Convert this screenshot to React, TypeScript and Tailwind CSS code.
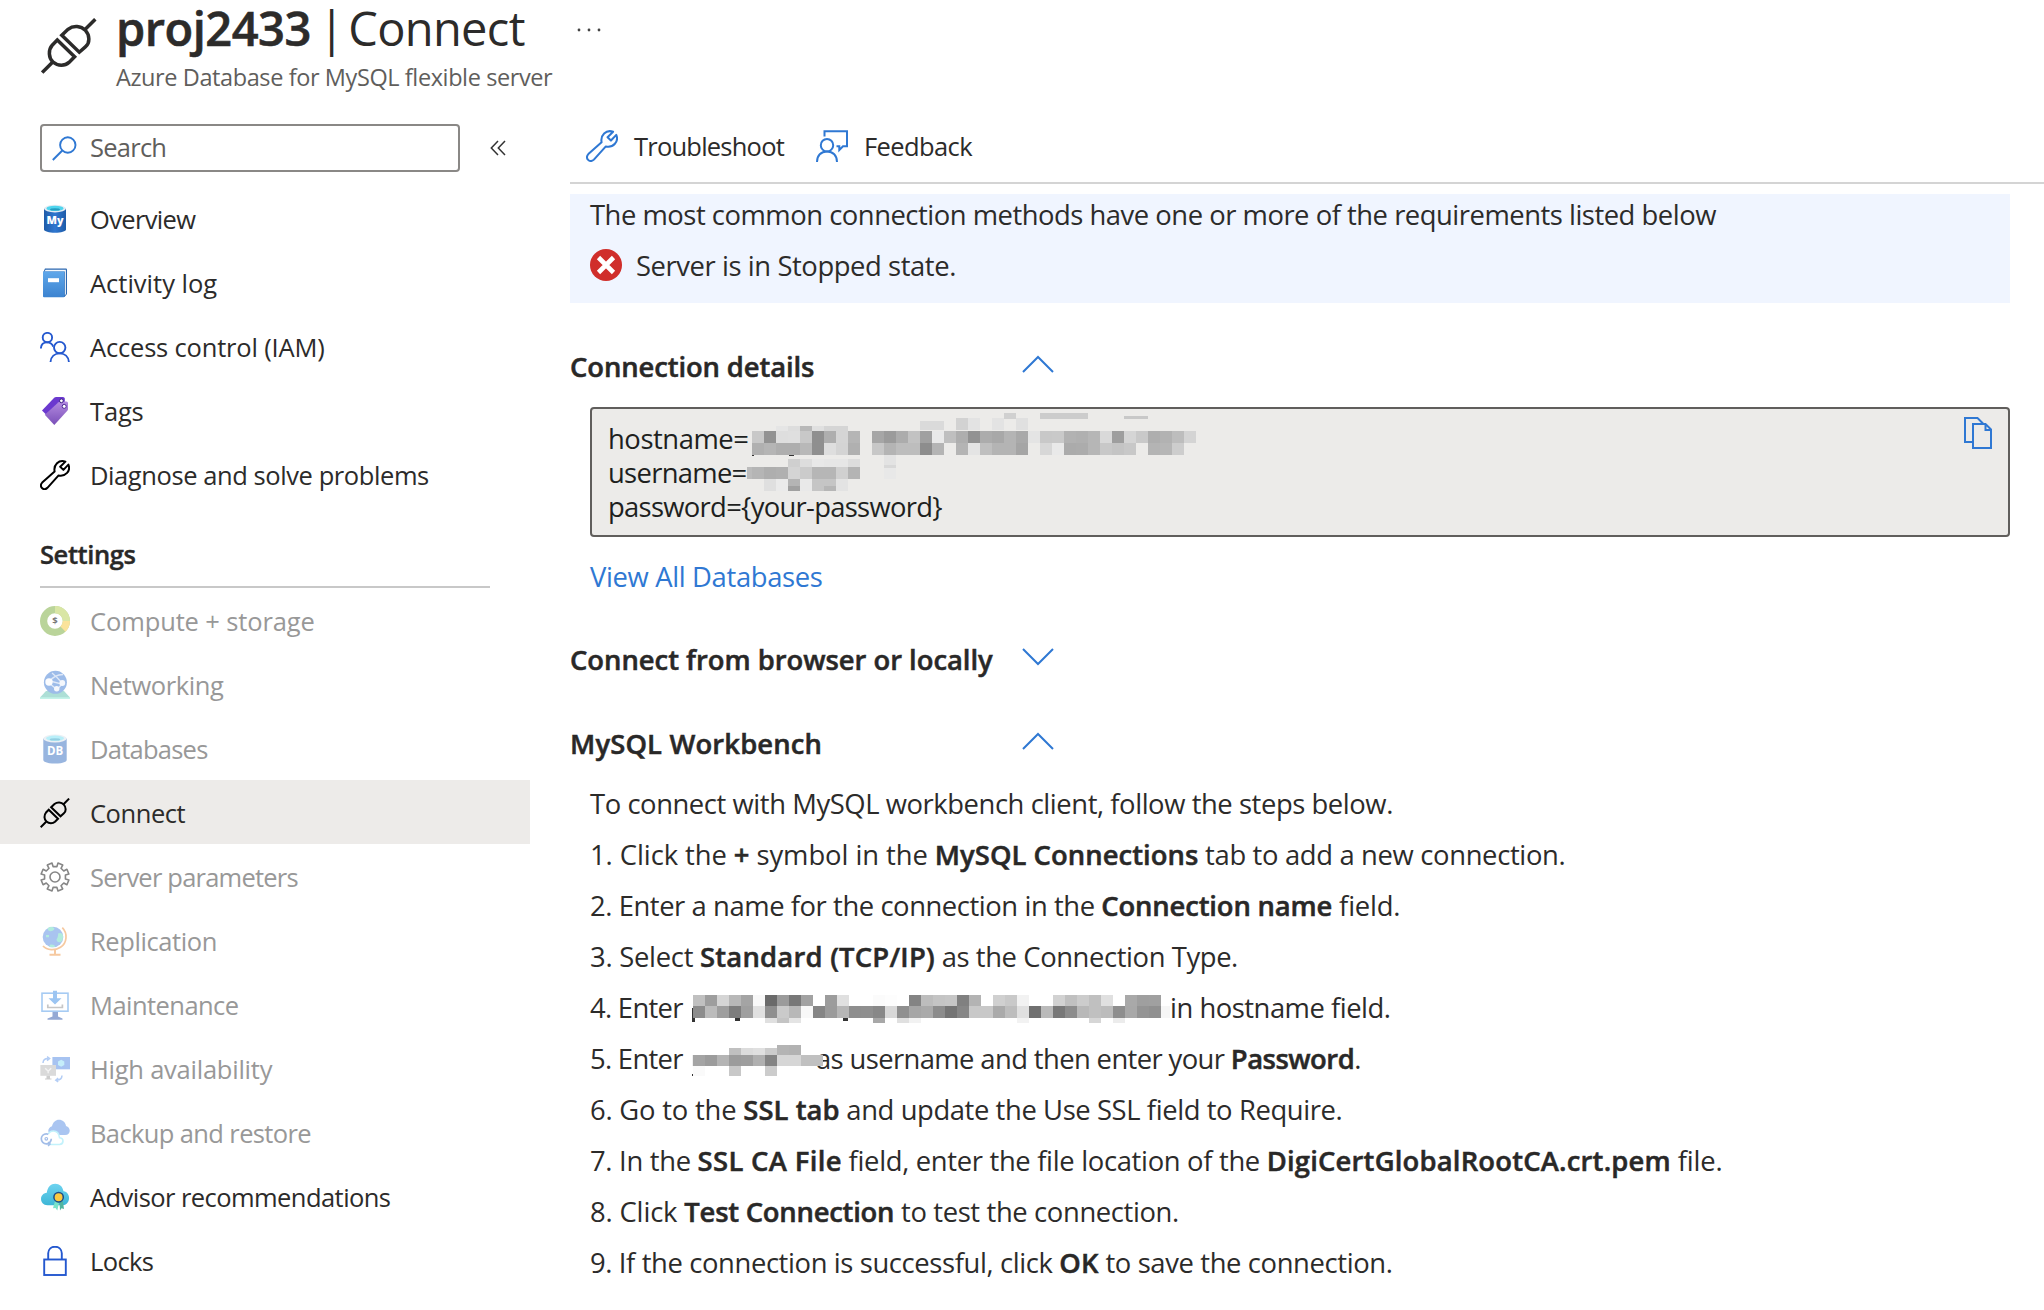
import React, { ReactNode } from "react";

/* ---------- icons ---------- */

function Plug({ className, stroke }: { className: string; stroke: number }) {
  return (
    <svg viewBox="0 0 56 56" fill="none" stroke="currentColor" strokeWidth={stroke} className={className}>
      <path d="M54.3 1.2 43.5 12M1.2 54.6 11.5 44.3" />
      <path d="M20.8 17.2 27 11.3C32.5 7 40 7.8 44.4 12.4C49 17.3 49 25 44.6 28.6L38.3 34.2Z" />
      <path d="M16.3 22 11.2 27.2C7 31.8 7.6 40 12 44C17 48.4 24 48 28 44.4L33.6 38.8Z" />
    </svg>
  );
}

function Wrench({ className, stroke }: { className: string; stroke: number }) {
  return (
    <svg viewBox="0 0 30 30" fill="none" stroke="currentColor" strokeWidth={stroke} strokeLinejoin="round" className={className}>
      <path d="M14.6 11.4C13.4 5 18.6-.6 25.4 1.6L20.2 6.8 23.4 9.9 28.4 4.6C31 11 25.6 16.8 18.6 15.4L7.4 27.8C5.6 29.6 3.4 29.4 2 28S.4 24.4 2.2 22.6Z" />
    </svg>
  );
}

function MySqlIcon() {
  return (
    <svg viewBox="0 0 30 30" className="size-[30px]">
      <defs>
        <linearGradient id="my" x1="0" x2="1">
          <stop offset="0" stopColor="#1e5ba8" />
          <stop offset=".5" stopColor="#2f77d0" />
          <stop offset="1" stopColor="#1e5ba8" />
        </linearGradient>
      </defs>
      <path d="M4 4.5V25.5C4 27.3 9 28.8 15 28.8S26 27.3 26 25.5V4.5Z" fill="url(#my)" />
      <ellipse cx="15" cy="4.6" rx="11" ry="3.8" fill="#e4ecf3" />
      <ellipse cx="15" cy="4.4" rx="8.6" ry="2.6" fill="#4fd5ee" />
      <ellipse cx="15" cy="5.4" rx="5" ry="1.2" fill="#259cc0" />
      <text x="15" y="19.6" textAnchor="middle" fontSize="10.5" textLength="17" lengthAdjust="spacingAndGlyphs" fontWeight="800" fill="#fff" fontFamily="Open Sans, sans-serif">My</text>
    </svg>
  );
}

function BookIcon() {
  return (
    <svg viewBox="0 0 30 30" className="size-[30px]">
      <defs>
        <linearGradient id="book" x1="0" y1="0" x2="0" y2="1">
          <stop offset="0" stopColor="#5ea7ea" />
          <stop offset="1" stopColor="#3c83d0" />
        </linearGradient>
      </defs>
      <path d="M5 .6H26Q27 .6 27 1.6V26L24.5 29H4.5L3.4 4Z" fill="#2a67b0" />
      <path d="M5.6 1.8H25.9V26L24.8 27.6V3.6H4.4Z" fill="#f4f8fc" />
      <path d="M3 3.6H24.4V28.6Q24.4 29.3 23.6 29.3H4Q3 29.3 3 28.3Z" fill="url(#book)" />
      <rect x="8" y="10.2" width="11" height="4" fill="#fff" />
    </svg>
  );
}

function PeopleIcon() {
  return (
    <svg viewBox="0 0 30 30" className="size-[30px]" fill="none" stroke="#2458cf" strokeWidth="1.9">
      <circle cx="7.4" cy="5.6" r="4.7" />
      <path d="M.9 16.6C1 12.6 3.6 10.4 7.2 10.4c3 0 5 1.4 6 4.2" />
      <circle cx="19.7" cy="15.6" r="5.7" />
      <path d="M10.5 30C11 24.6 14.6 21.4 19.7 21.4S28.4 24.6 28.9 30" />
    </svg>
  );
}

function TagsIcon() {
  return (
    <svg viewBox="0 0 30 30" className="size-[30px]">
      <defs>
        <linearGradient id="tag" x1="0" y1="0" x2="0" y2="1">
          <stop offset="0" stopColor="#b38be0" />
          <stop offset="1" stopColor="#7a4fb8" />
        </linearGradient>
      </defs>
      <path d="M2 14.5 14.2 1.7Q15 1 16.2 1H23Q24.6 1 24.8 2.5V8L7 19.6Z" fill="#6b39cf" />
      <path d="M4.8 18.8 18.5 6.2Q19.3 5.5 20.3 5.5H26.5Q28 5.6 28 7V13Q28 14 27.3 14.8L14.3 29Z" fill="url(#tag)" />
      <circle cx="21.4" cy="4.8" r="1.9" fill="#fff" stroke="#3c1f86" strokeWidth="1" />
      <circle cx="24.2" cy="10.4" r="2" fill="#fff" stroke="#4c2a96" strokeWidth="1" />
    </svg>
  );
}

function ComputeIcon() {
  return (
    <svg viewBox="0 0 30 30" className="size-[30px]" fill="none">
      <circle cx="15" cy="15" r="11.4" stroke="#bad49a" strokeWidth="7.2" />
      <path d="M15 3.6A11.4 11.4 0 0 1 26.4 15" stroke="#d9e6a5" strokeWidth="7.2" />
      <path d="M26.4 15A11.4 11.4 0 0 1 23 23.1" stroke="#fbe39a" strokeWidth="7.2" />
      <text x="15" y="18.4" textAnchor="middle" fontSize="9.5" fontWeight="700" fill="#777" fontFamily="Open Sans, sans-serif">$</text>
    </svg>
  );
}

function NetworkingIcon() {
  return (
    <svg viewBox="0 0 30 30" className="size-[30px]">
      <path d="M6 21H24L30 27.5V29H0V27.5Z" fill="#addfd6" />
      <path d="M0 27.3H30V29H0Z" fill="#c3f3e8" />
      <circle cx="15.4" cy="12.3" r="11.5" fill="#9dbce9" />
      <path d="M10 11 22 14 17 19.5 9 13M10 11Q14 5 23 4.5M12 3Q17 7 22 13" stroke="#dfe9f8" strokeWidth="1.3" fill="none" />
      <circle cx="9" cy="12" r="3.7" fill="#fbfcfe" />
      <circle cx="22.3" cy="13" r="2.9" fill="#f4f7fc" />
      <circle cx="16.7" cy="18.7" r="2.7" fill="#f4f7fc" />
    </svg>
  );
}

function DatabasesIcon() {
  return (
    <svg viewBox="0 0 30 30" className="size-[30px]">
      <path d="M3.3 4.5V26C3.3 28 8.5 29.6 15 29.6S26.7 28 26.7 26V4.5Z" fill="#98b5df" />
      <ellipse cx="15" cy="4.5" rx="11.7" ry="4" fill="#ebf0f5" />
      <ellipse cx="15" cy="4.3" rx="9" ry="2.7" fill="#b9eff9" />
      <ellipse cx="15" cy="5.4" rx="5.3" ry="1.2" fill="#93cfe2" />
      <text x="15" y="21.3" textAnchor="middle" fontSize="11.5" fontWeight="700" fill="#fff" fontFamily="Open Sans, sans-serif">DB</text>
    </svg>
  );
}

function GearIcon() {
  const teeth = [0, 45, 90, 135, 180, 225, 270, 315];
  const pt = (r: number, deg: number) => {
    const a = ((deg - 90) * Math.PI) / 180;
    return `${(15 + r * Math.cos(a)).toFixed(2)} ${(15 + r * Math.sin(a)).toFixed(2)}`;
  };
  const d =
    teeth
      .map((t, i) => {
        const c = t + 22.5;
        return `${i === 0 ? "M" : "L"}${pt(10.6, c - 12)}L${pt(14.2, c - 10.5)}L${pt(14.2, c + 10.5)}L${pt(10.6, c + 12)}`;
      })
      .join("") + "Z";
  return (
    <svg viewBox="0 0 30 30" className="size-[30px]" fill="none" stroke="#868686" strokeWidth="1.6" strokeLinejoin="round">
      <path d={d} />
      <circle cx="15" cy="15" r="5" />
    </svg>
  );
}

function ReplicationIcon() {
  return (
    <svg viewBox="0 0 30 30" className="size-[30px]">
      <circle cx="13" cy="11" r="10.3" fill="#a9c4f0" />
      <path d="M8 2Q12-.5 14.5 2.5 13.5 5.5 10 5.2 7 4.5 8 2ZM18 7.5Q22 6 23 9.5 23.5 13 21 16 17 17 16.5 13.5 18.5 11 18 7.5ZM10 18.7Q14 18 15.5 20.5 13 22 9 20.7ZM6 9h3v2.2h-3Z" fill="#b2ecdd" />
      <path d="M22.3 1.7C28 7.5 27 17 20.5 21.3C15 24.8 7 24.5 3 20" fill="none" stroke="#f6c9a0" strokeWidth="1.7" />
      <path d="M15 23.5V28.5M9.5 28.8H20.5" stroke="#f6c9a0" strokeWidth="2" />
    </svg>
  );
}

function MaintenanceIcon() {
  return (
    <svg viewBox="0 0 30 30" className="size-[30px]">
      <rect x="2" y="3.2" width="26" height="18" fill="#fff" stroke="#a6cbf3" strokeWidth="1.6" />
      <path d="M12.5 22h5.5v4.5l4.5 2v1.2H7.5v-1.2l5-2Z" fill="#94a9d4" />
      <path d="M13 .7h4v7.6h4.5L15 14.6 8.5 8.3H13Z" fill="#9cc5f2" />
      <path d="M7.8 14.5v3h14.6v-3" fill="none" stroke="#c6c6c6" strokeWidth="1.7" />
    </svg>
  );
}

function AvailabilityIcon() {
  return (
    <svg viewBox="0 0 30 30" className="size-[30px]">
      <rect x="12.4" y="3" width="17.6" height="12.3" fill="#a7c3f1" />
      <path d="M21.2 5.8 24.3 7.5V11L21.2 12.8 18 11V7.5Z" fill="#c5eefa" />
      <rect x=".4" y="11" width="15.6" height="10.8" fill="#dadada" />
      <path d="M5.2 14.2 8.2 17.2 11.2 14.2M8.2 17.2v2" stroke="#f3f3f3" strokeWidth="1.4" fill="none" />
      <path d="M6.5 21.8h3.5v2.6h1.5v1H5v-1h1.5Z" fill="#cdcdcd" />
      <path d="M3 9Q3.2 4.6 8 4.6M7 2.6 9.6 4.6 7 6.7M22 21.5Q21.8 26 17 26M18.2 24 15.8 26.1 18.2 28" stroke="#b3cdf5" strokeWidth="1.5" fill="none" />
    </svg>
  );
}

function BackupIcon() {
  return (
    <svg viewBox="0 0 30 30" className="size-[30px]">
      <path d="M12.5 17C7.5 17 6.5 10 12 8.3 13 4 16 1.7 19 1.8 22.5 1.8 25.5 4.2 26 8 31 9 31.3 17 25 17Z" fill="#aac5f1" />
      <path d="M9 26.5H19.5C24 26 24.2 20.2 19.6 19.8 19 15.4 16.5 13 13.5 13 10.5 13 8.5 15 7.8 17.3Z" fill="#fff" stroke="#c3f2fb" strokeWidth="1.6" />
      <circle cx="6.3" cy="20.8" r="5" fill="#fff" stroke="#a2bde8" strokeWidth="1.7" strokeDasharray="25 6.4" />
      <circle cx="6.3" cy="20.8" r="1.3" fill="none" stroke="#a2bde8" strokeWidth="1.2" />
      <path d="M6.5 25.8H10M8 24 10.2 25.9 8 28" stroke="#a2bde8" strokeWidth="1.3" fill="none" />
    </svg>
  );
}

function AdvisorIcon() {
  return (
    <svg viewBox="0 0 30 30" className="size-[30px]">
      <defs>
        <linearGradient id="adv" x1="0" y1="0" x2="0" y2="1">
          <stop offset="0" stopColor="#6ed3f0" />
          <stop offset="1" stopColor="#3db6d6" />
        </linearGradient>
      </defs>
      <path d="M7.5 23.3C-1 23-1 11.5 6.8 10.8 7.5 4.8 11 1.7 15.2 1.7 19.5 1.7 22.8 4.5 23.5 9.3 31.5 10.5 30.5 22.8 23 23.3Z" fill="url(#adv)" />
      <path d="M15 19 13 26.3 15.5 26 17.3 28.6 19 21Z" fill="#7be3c9" />
      <path d="M19.5 20.5 20 28.6 21.5 26.3 24 27 22.8 19Z" fill="#51b59f" />
      <circle cx="18.6" cy="15.2" r="4.7" fill="#fcc940" stroke="#1d4c86" strokeWidth="1.5" />
    </svg>
  );
}

function LockIcon() {
  return (
    <svg viewBox="0 0 30 30" className="size-[30px]" fill="none" stroke="#2458cf" strokeWidth="1.9">
      <rect x="4.2" y="13.5" width="21.6" height="15.5" />
      <path d="M8.2 13.5V7.3C8.2 3.5 11 .7 15 .7S21.8 3.5 21.8 7.3V13.5" />
    </svg>
  );
}

function Chevron({ down }: { down?: boolean }) {
  return (
    <svg viewBox="0 0 32 18" className="h-[18px] w-[32px]" fill="none" stroke="#2f78d3" strokeWidth="2">
      <path d={down ? "M1 1 16 16 31 1" : "M1 17 16 2 31 17"} />
    </svg>
  );
}

/* ---------- redacted values: rows of 12px grey cells ---------- */

type Strip = { x: number; y: number; h: number; cells: string };

function Mosaic({ strips, marks, className }: { strips: Strip[]; marks: [number, number, number, number][]; className: string }) {
  return (
    <svg className={className} shapeRendering="crispEdges">
      {marks.map(([x, y, w, h], i) => (
        <rect key={`m${i}`} x={x} y={y} width={w} height={h} fill="#333" />
      ))}
      {strips.map((s, r) =>
        s.cells.split(" ").map((c, i) =>
          c === "--" ? null : <rect key={`${r}-${i}`} x={s.x + i * 12} y={s.y} width="12" height={s.h} fill={`#${c}${c}${c}`} />
        )
      )}
    </svg>
  );
}

const hostStrips: Strip[] = [
  { x: 257, y: 4, h: 6, cells: "d0 -- -- cc cc cc cc" },
  { x: 377, y: 7, h: 3, cells: "c8 c8" },
  { x: 173, y: 12, h: 9, cells: "da da -- d3 e4" },
  { x: 209, y: 9, h: 12, cells: "d2 e3 -- e3 -- e0" },
  { x: 29, y: 17, h: 5, cells: "e5 dd b8 e0 d5 d5" },
  { x: 5, y: 22, h: 12, cells: "c8 92 de df c8 8f ae d5 b5 -- a6 9b ac c2 a0 e9 bf ae 92 ac a8 b4 a9 e4 c8 c9 b2 b0 b6 d9 9e d5 c9 ae b2 bd d4" },
  { x: 5, y: 34, h: 12, cells: "b0 b5 ae ae b8 8f de d4 b0 -- c7 b4 bd bd 8d b4 -- b4 e4 bf b4 b4 a5 -- d7 e9 ab ac b6 c8 c4 c8 -- b4 b6 cd" },
  { x: 137, y: 46, h: 10, cells: "e3" },
  { x: 137, y: 56, h: 3, cells: "d8" },
  { x: 137, y: 59, h: 11, cells: "e8" },
  { x: 41, y: 50, h: 8, cells: "cf dd e8 e6 e6 dd" },
  { x: 0, y: 58, h: 12, cells: "bb" },
  { x: 5, y: 58, h: 12, cells: "b5 ae b0 d4 cb b6 b6 d0 b4" },
  { x: 17, y: 70, h: 12, cells: "df ea -- e9 c5 b8 e3" },
  { x: 41, y: 70, h: 7, cells: "b4 -- -- c5" },
  { x: 41, y: 77, h: 5, cells: "a0 -- -- b6" },
];

const hostStepStrips: Strip[] = [
  { x: 1, y: 1, h: 11, cells: "c0 9e d5 b8 a4 f8 6a 9b 78 a2 -- 9c e0 -- -- fb fd -- 84 bd c4 c6 80 b3 -- d0 c9 f2 -- -- d2 c0 cc c0 e0 -- a9 9f a0" },
  { x: 1, y: 12, h: 12, cells: "8c bb 9e 7d 9f e0 8f ca b8 f8 85 9b b6 8e 8f 88 d8 8f a6 aa 8c 74 86 c8 c8 aa bd e0 70 ba 78 8c b8 c0 bc 8e a8 94 90 f6" },
  { x: 1, y: 24, h: 5, cells: "-- -- -- -- -- -- e0 c4 e4 -- -- -- -- -- -- a8 -- e0 f2 -- -- -- -- -- -- -- -- f2 -- -- -- -- -- d6 -- ec" },
];

const userStepStrips: Strip[] = [
  { x: 37, y: 3, h: 7, cells: "c0 dc e0 cc" },
  { x: 85, y: 0, h: 10, cells: "b4 b2" },
  { x: -5, y: 10, h: 11, cells: "f0" },
  { x: 1, y: 10, h: 11, cells: "a4 9c b4 9c 9e b0 84 d6 d6 c0 c0" },
  { x: 1, y: 21, h: 10, cells: "fa -- -- c8 -- -- cc" },
];

/* ---------- sidebar ---------- */

type Item = { label: string; icon: ReactNode; track: string; state?: "off" | "on" };

const general: Item[] = [
  { label: "Overview", icon: <MySqlIcon />, track: "tracking-[-0.65px]" },
  { label: "Activity log", icon: <BookIcon />, track: "tracking-[0px]" },
  { label: "Access control (IAM)", icon: <PeopleIcon />, track: "tracking-[-0.18px]" },
  { label: "Tags", icon: <TagsIcon />, track: "tracking-[-0.15px]" },
  { label: "Diagnose and solve problems", icon: <Wrench stroke={2} className="size-[30px] text-black" />, track: "tracking-[-0.42px]" },
];

const settings: Item[] = [
  { label: "Compute + storage", icon: <ComputeIcon />, track: "tracking-[-0.12px]", state: "off" },
  { label: "Networking", icon: <NetworkingIcon />, track: "tracking-[-0.4px]", state: "off" },
  { label: "Databases", icon: <DatabasesIcon />, track: "tracking-[-0.75px]", state: "off" },
  { label: "Connect", icon: <Plug stroke={3.8} className="size-[30px] text-black" />, track: "tracking-[-0.45px]", state: "on" },
  { label: "Server parameters", icon: <GearIcon />, track: "tracking-[-0.78px]", state: "off" },
  { label: "Replication", icon: <ReplicationIcon />, track: "tracking-[-0.4px]", state: "off" },
  { label: "Maintenance", icon: <MaintenanceIcon />, track: "tracking-[-0.55px]", state: "off" },
  { label: "High availability", icon: <AvailabilityIcon />, track: "tracking-[-0.24px]", state: "off" },
  { label: "Backup and restore", icon: <BackupIcon />, track: "tracking-[-0.62px]", state: "off" },
  { label: "Advisor recommendations", icon: <AdvisorIcon />, track: "tracking-[-0.56px]" },
  { label: "Locks", icon: <LockIcon />, track: "tracking-[-0.6px]" },
];

function NavItem({ item }: { item: Item }) {
  const bg = item.state === "on" ? "bg-[#edebe9]" : "";
  const color = item.state === "off" ? "text-[#989898]" : "text-[#2c2b2a]";
  return (
    <li className={`flex h-16 items-center gap-5 pt-[2px] pl-10 ${bg} ${color}`}>
      {item.icon}
      <span className={item.track}>{item.label}</span>
    </li>
  );
}

function Sidebar() {
  return (
    <aside className="w-[530px] shrink-0 text-[25.5px] leading-[34px]">
      <div className="flex h-[76px] items-start pt-[14px] pl-10">
        <div className="flex h-12 w-[420px] items-center gap-[13px] rounded-[4px] border-2 border-[#8a8886] pl-[10px] text-[#605e5c]">
          <svg viewBox="0 0 25 25" className="size-[25px]" fill="none" stroke="#2f78d3" strokeWidth="1.9">
            <circle cx="15.8" cy="9" r="7.7" />
            <path d="M10.3 14.5.8 24" />
          </svg>
          <span className="-mt-[2px] tracking-[-0.75px]">Search</span>
        </div>
        <svg viewBox="0 0 16 16" className="mt-[16px] ml-[30px] size-4" fill="none" stroke="#333" strokeWidth="1.5">
          <path d="M8 1 1.3 8 8 15M15 1 8.3 8 15 15" />
        </svg>
      </div>
      <ul>
        {general.map((i) => (
          <NavItem key={i.label} item={i} />
        ))}
      </ul>
      <div className="ml-10 flex h-[82px] w-[450px] flex-col justify-end border-b-2 border-[#c8c8c8] pb-[15px]">
        <h2 className="font-semibold tracking-[-0.4px] text-[#292827] [-webkit-text-stroke:0.4px]">Settings</h2>
      </div>
      <ul>
        {settings.map((i) => (
          <NavItem key={i.label} item={i} />
        ))}
      </ul>
    </aside>
  );
}

/* ---------- main ---------- */

function Heading({ children, down, track }: { children: string; down?: boolean; track: string }) {
  return (
    <div className="flex h-10 items-center">
      <h3 className={`w-[452px] pt-[2px] font-semibold text-[#292827] [-webkit-text-stroke:0.5px] ${track}`}>{children}</h3>
      <span className="-mt-1">
        <Chevron down={down} />
      </span>
    </div>
  );
}

function B({ children, className }: { children: string; className: string }) {
  return <b className={`font-semibold text-[#292827] [-webkit-text-stroke:0.5px] ${className}`}>{children}</b>;
}

function Step({ children }: { children: ReactNode }) {
  return <li className="flex h-[51px] items-center whitespace-pre">{children}</li>;
}

function Steps() {
  return (
    <ol className="pl-5">
      <Step><span className="tracking-[-0.43px]">To connect with MySQL workbench client, follow the steps below.</span></Step>
      <Step>
        <span className="tracking-[-0.07px]">{"1. Click the "}<b className="font-semibold [-webkit-text-stroke:0.5px]">+</b>{" symbol in the "}</span>
        <B className="tracking-[0.05px]">MySQL Connections</B>
        <span className="tracking-[-0.34px]">{" tab to add a new connection."}</span>
      </Step>
      <Step>
        <span className="tracking-[-0.43px]">{"2. Enter a name for the connection in the "}</span>
        <B className="tracking-[-0.15px]">Connection name</B>
        <span className="tracking-[-0.21px]">{" field."}</span>
      </Step>
      <Step>
        <span className="tracking-[-0.27px]">{"3. Select "}</span>
        <B className="tracking-[0.23px]">Standard (TCP/IP)</B>
        <span className="tracking-[-0.4px]">{" as the Connection Type."}</span>
      </Step>
      <Step>
        <span className="w-[102px] tracking-[-0.7px]">4. Enter</span>
        <Mosaic className="mt-1 h-[32px] w-[478px]" strips={hostStepStrips} marks={[[0, 14, 3, 14], [43, 24, 5, 3], [151, 24, 5, 3], [188, 24, 4, 3]]} />
        <span className="tracking-[-0.48px]">in hostname field.</span>
      </Step>
      <Step>
        <span className="w-[102px] tracking-[-0.7px]">5. Enter</span>
        <span className="relative flex items-center">
          <span className="ml-[124px] tracking-[-0.61px]">{"as username and then enter your "}</span>
          <Mosaic className="absolute top-[6px] left-0 h-[32px] w-[131px]" strips={userStepStrips} marks={[[0, 29, 3, 2]]} />
        </span>
        <B className="tracking-[-0.5px]">Password</B>
        <span>.</span>
      </Step>
      <Step>
        <span className="tracking-[-0.2px]">{"6. Go to the "}</span>
        <B className="tracking-[0.06px]">SSL tab</B>
        <span className="tracking-[-0.4px]">{" and update the Use SSL field to Require."}</span>
      </Step>
      <Step>
        <span className="tracking-[-0.3px]">{"7. In the "}</span>
        <B className="tracking-[0.35px]">SSL CA File</B>
        <span className="tracking-[-0.32px]">{" field, enter the file location of the "}</span>
        <B className="tracking-[0.2px]">DigiCertGlobalRootCA.crt.pem</B>
        <span className="tracking-[-0.2px]">{" file."}</span>
      </Step>
      <Step>
        <span className="tracking-[-0.15px]">{"8. Click "}</span>
        <B className="tracking-[-0.23px]">Test Connection</B>
        <span className="tracking-[-0.37px]">{" to test the connection."}</span>
      </Step>
      <Step>
        <span className="tracking-[-0.38px]">{"9. If the connection is successful, click "}</span>
        <B className="tracking-[0.2px]">OK</B>
        <span className="tracking-[-0.37px]">{" to save the connection."}</span>
      </Step>
    </ol>
  );
}

function Toolbar() {
  return (
    <div className="flex h-[74px] items-center border-b-2 border-[#d4d4d4] pl-4 text-[25.5px]">
      <Wrench stroke={1.9} className="size-[32px] text-[#2f78d3]" />
      <span className="ml-[16px] w-[182px] tracking-[-0.78px]">Troubleshoot</span>
      <svg viewBox="0 0 32 32" className="size-[32px]" fill="none" stroke="#2f78d3" strokeWidth="2">
        <path d="M8.5 6.5V1.2H31V16.3H27L23.3 20V16.3H20.5" />
        <circle cx="11" cy="15.2" r="6.2" />
        <path d="M1 32C1 25.5 5 21.5 11 21.5S21 25.5 21 32" />
      </svg>
      <span className="ml-[16px] tracking-[-0.6px]">Feedback</span>
    </div>
  );
}

function Main() {
  return (
    <main className="ml-10 flex-1 text-[27.4px] leading-10 text-[#2c2b2a]">
      <Toolbar />
      <section className="mt-[10px] mr-[34px] h-[109px] bg-[#f0f5ff] pl-5">
        <p className="h-[46px] leading-[42px] tracking-[-0.48px]">The most common connection methods have one or more of the requirements listed below</p>
        <div className="flex h-[51px] items-center gap-[14px]">
          <svg viewBox="0 0 32 32" className="-mt-[1px] size-[32px]">
            <circle cx="16" cy="16" r="16" fill="#d02e2b" />
            <path d="M8.5 8.5 23.5 23.5M23.5 8.5 8.5 23.5" stroke="#fff" strokeWidth="4.6" />
          </svg>
          <span className="tracking-[-0.42px]">Server is in Stopped state.</span>
        </div>
      </section>
      <div className="mt-[43px]">
        <Heading track="tracking-[-0.1px]">Connection details</Heading>
      </div>
      <div className="relative mt-[21px] mr-[34px] ml-5 h-[130px] rounded-[4px] border-2 border-[#605e5c] bg-[#ecebe9] pt-[13px] pl-4 leading-[34px] text-[#201f1e]">
        <p className="tracking-[-0.45px]">hostname=</p>
        <p className="tracking-[-0.7px]">username=</p>
        <p className="tracking-[-0.7px]">{"password={your-password}"}</p>
        <Mosaic className="absolute top-0 left-[155px] h-[86px] w-[460px]" strips={hostStrips} marks={[[5, 40, 2, 7], [42, 44, 5, 3]]} />
        <svg viewBox="0 0 28 32" className="absolute top-2 right-[16px] h-[32px] w-[28px]" fill="none" stroke="#2f78d3" strokeWidth="2">
          <path d="M9 25H1V1H13.5L19 6.5" />
          <path d="M9 31V7H21.5L27 12.5V31ZM21.5 7V13H27" />
        </svg>
      </div>
      <p className="mt-[20px] pl-5 tracking-[-0.35px] text-[#2f78d3]">View All Databases</p>
      <div className="mt-[42px]">
        <Heading down track="tracking-[-0.02px]">Connect from browser or locally</Heading>
      </div>
      <div className="mt-[44px] mb-[15px]">
        <Heading track="tracking-[0.15px]">MySQL Workbench</Heading>
      </div>
      <Steps />
    </main>
  );
}

export default function App() {
  return (
    <div className="h-[1310px] w-[2044px] overflow-hidden bg-white font-['Open_Sans','Noto_Sans',sans-serif] text-[#2c2b2a]">
      <header className="flex h-[110px] items-start pl-[41px]">
        <Plug stroke={3.5} className="mt-[18px] size-[56px]" />
        <div className="ml-[19px]">
          <h1 className="h-[57px] text-[47px] leading-[57px] whitespace-pre">
            <span className="font-semibold tracking-[-0.5px] [-webkit-text-stroke:0.6px]">proj2433</span>
            <span className="tracking-[-4.3px]"> | </span>
            <span className="tracking-[-0.65px]">Connect</span>
          </h1>
          <p className="text-[23.5px] leading-10 tracking-[-0.4px] text-[#605e5c]">Azure Database for MySQL flexible server</p>
        </div>
        <svg viewBox="0 0 24 4" className="mt-[28px] ml-[25px] h-[4px] w-[24px]" fill="#444">
          <circle cx="2" cy="2" r="1.4" />
          <circle cx="12" cy="2" r="1.4" />
          <circle cx="22" cy="2" r="1.4" />
        </svg>
      </header>
      <div className="flex">
        <Sidebar />
        <Main />
      </div>
    </div>
  );
}
